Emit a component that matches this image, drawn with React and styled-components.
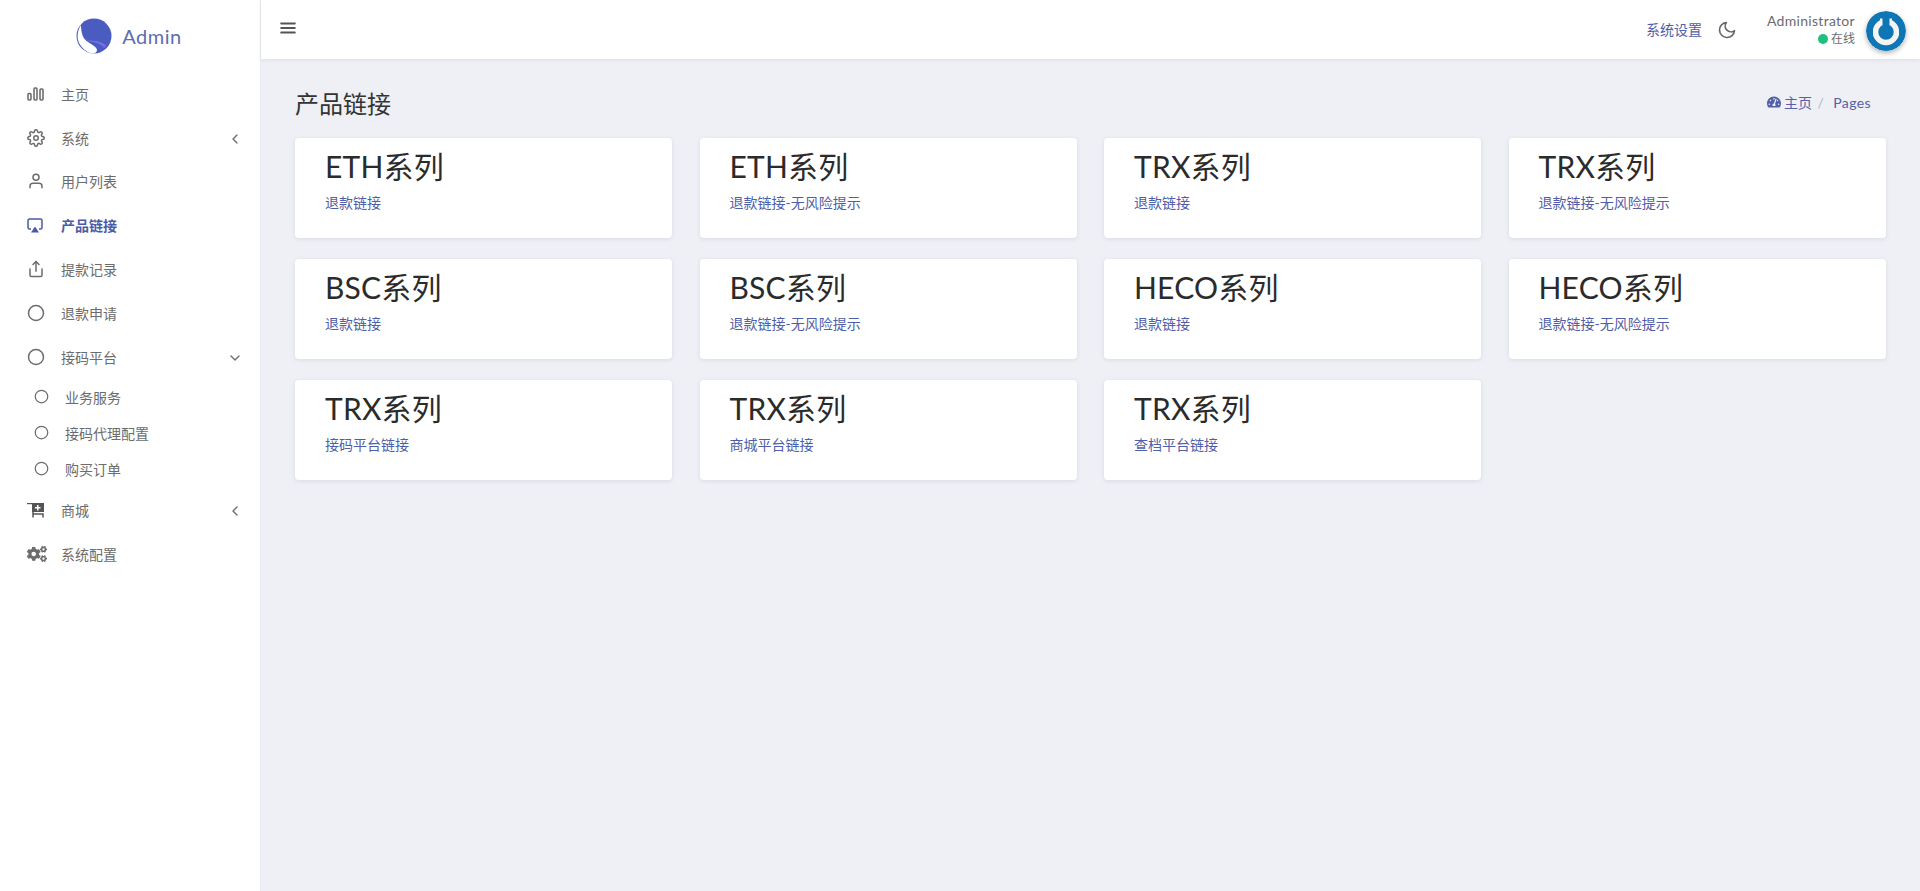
import React from "react";
import styled, { createGlobalStyle } from "styled-components";
import { FiSettings, FiUser, FiShare, FiCircle, FiChevronLeft, FiChevronDown, FiMoon, FiMenu } from "react-icons/fi";
import { FaCogs, FaTachometerAlt } from "react-icons/fa";

const FONT = `Lato, "Noto Sans CJK SC", sans-serif`;

const Global = createGlobalStyle`
  html, body { margin: 0; padding: 0; height: 100%; }
  body { font-family: ${FONT}; font-size: 14px; color: #6c757d; background: #eef0f5; }
  * { box-sizing: border-box; }
`;

const Page = styled.div`
  display: flex;
  height: 891px;
  overflow: hidden;
`;

const Sidebar = styled.aside`
  width: 261px;
  flex: none;
  background: #fff;
  border-right: 1px solid #e8eaf0;
`;

const Brand = styled.div`
  height: 72px;
  display: flex;
  align-items: center;
  justify-content: center;
  gap: 10px;
  font-size: 20px;
  letter-spacing: 0.5px;
  color: #5f6cb0;
  padding-right: 2px;
`;

const Nav = styled.nav`
  display: flex;
  flex-direction: column;
`;

const NavItem = styled.div`
  height: 43.8px;
  display: flex;
  align-items: center;
  padding: 0 17px 0 27px;
  font-size: 14px;
  font-weight: ${p => (p.$active ? 700 : 400)};
  color: ${p => (p.$active ? "#4a5aa8" : "#6c6c6c")};
`;

const NavIcon = styled.span`
  width: 34px;
  flex: none;
  display: flex;
  align-items: center;
  font-size: 18px;
`;

const Arrow = styled.span`
  margin: 2px 0 0 auto;
  display: flex;
  font-size: 16px;
`;

const SubGroup = styled.div`
  padding-bottom: 2px;
`;

const SubItem = styled.div`
  height: 36px;
  display: flex;
  align-items: center;
  padding-left: 34px;
  font-size: 14px;
  color: #6c6c6c;
`;

const SubIcon = styled.span`
  width: 31px;
  flex: none;
  display: flex;
  font-size: 15px;
`;

const Main = styled.div`
  flex: 1;
  min-width: 0;
`;

const Topbar = styled.header`
  height: 59px;
  background: #fff;
  display: flex;
  align-items: center;
  padding: 0 14px 0 18px;
  box-shadow: 0 1px 4px rgba(80, 90, 120, 0.12);
`;

const MenuBtn = styled.span`
  display: flex;
  font-size: 18px;
  color: #555;
  margin-top: -4px;
`;

const TopRight = styled.div`
  margin-left: auto;
  display: flex;
  align-items: center;
`;

const TopLink = styled.span`
  font-size: 14px;
  color: #4f5ea8;
  margin-top: -2px;
`;

const Moon = styled.span`
  display: flex;
  font-size: 20px;
  color: #666;
  margin: 0 30px 0 15px;
`;

const UserBox = styled.div`
  display: flex;
  flex-direction: column;
  align-items: flex-end;
  margin-right: 11px;
  line-height: 18px;
  color: #6c6c6c;
  font-size: 14px;
  letter-spacing: 0.3px;
`;

const Status = styled.span`
  display: flex;
  align-items: center;
  gap: 3px;
  font-size: 12px;
  letter-spacing: 0;
`;

const Dot = styled.i`
  width: 10px;
  height: 10px;
  border-radius: 50%;
  background: #1fbf7f;
`;

const Avatar = styled.svg`
  width: 40px;
  height: 40px;
  flex: none;
  margin-top: 3px;
  border-radius: 50%;
  box-shadow: 0 2px 5px rgba(0, 0, 0, 0.3);
`;

const Content = styled.main`
  padding: 15px 34px 0 34px;
`;

const TitleRow = styled.div`
  display: flex;
  align-items: center;
  justify-content: space-between;
  height: 64px;
  padding: 0 15px 8px 0;
`;

const Title = styled.h1`
  margin: 0;
  font-size: 24px;
  font-weight: 400;
  color: #333;
`;

const Crumbs = styled.div`
  display: flex;
  align-items: center;
  font-size: 14px;
  color: #5361a8;
`;

const CrumbIcon = styled.span`
  display: flex;
  font-size: 14px;
  margin-right: 3px;
`;

const Sep = styled.span`
  color: #b3b8c4;
  margin: 0 9.500px 0 5.500px;
`;

const CrumbLast = styled.span`
  letter-spacing: 0.4px;
`;

const Grid = styled.div`
  display: grid;
  grid-template-columns: repeat(4, 377px);
  column-gap: 27.5px;
  row-gap: 21px;
`;

const Card = styled.div`
  height: 100px;
  background: #fff;
  border-radius: 4px;
  box-shadow: 0 1px 4px rgba(80, 90, 120, 0.14);
  padding: 7px 30px 0;
`;

const CardTitle = styled.h3`
  margin: 0;
  font-size: 30px;
  line-height: 42px;
  font-weight: 400;
  letter-spacing: 0.2px;
  color: #2b2b2b;
`;

const CardLink = styled.div`
  margin-top: 6px;
  font-size: 14px;
  line-height: 20px;
  color: #4f5ea8;
`;

const CARDS = [
  ["ETH系列", "退款链接"],
  ["ETH系列", "退款链接-无风险提示"],
  ["TRX系列", "退款链接"],
  ["TRX系列", "退款链接-无风险提示"],
  ["BSC系列", "退款链接"],
  ["BSC系列", "退款链接-无风险提示"],
  ["HECO系列", "退款链接"],
  ["HECO系列", "退款链接-无风险提示"],
  ["TRX系列", "接码平台链接"],
  ["TRX系列", "商城平台链接"],
  ["TRX系列", "查档平台链接"],
];

function Logo() {
  return (
    <svg width="36" height="36" viewBox="0 0 36 36">
      <circle cx="18" cy="18" r="17.5" fill="#4a5cc0" />
      <path d="M5 7 C1 13 0 22 5 28 C8 32 12 35 17 35.500 C19 35.500 21 34 21 32 C21 29 16 27 12 24 C7 21 5 15 5 7Z" fill="#fff" />
      <path d="M6 19 C11 23 17 24 21 25 C24 26 27 28 28 30 L30 28 C28 25 24 24 20 23 C15 23 10 22 6 19Z" fill="#7a6cf0" />
    </svg>
  );
}

function BarsIcon() {
  return (
    <svg width="17" height="14" viewBox="0 0 17 14" fill="none" stroke="#666" strokeWidth="1.500">
      <rect x="1" y="6.500" width="3" height="6.500" rx="1" />
      <rect x="7" y="1" width="3" height="12" rx="1" />
      <rect x="13" y="2" width="3" height="11" rx="1" />
    </svg>
  );
}

function AirplayIcon() {
  return (
    <svg width="16" height="15" viewBox="0 0 16 15">
      <path d="M4 11H2.500A1.500 1.500 0 0 1 1 9.500v-7A1.500 1.500 0 0 1 2.500 1h11A1.500 1.500 0 0 1 15 2.500v7a1.500 1.500 0 0 1-1.500 1.500H12" fill="none" stroke="#4a5aa8" strokeWidth="1.500" />
      <path d="M8 8.500L12 14.500H4z" fill="#4a5aa8" />
    </svg>
  );
}

function CartIcon() {
  return (
    <svg width="17" height="15" viewBox="0 0 17 15">
      <path d="M0 .6h5" stroke="#555" strokeWidth="1.200" />
      <path d="M5 0h12v9H5z" fill="#555" />
      <path d="M10 2h1.500v2H13.500v1.500H11.500v2H10v-2H8V4h2z" fill="#fff" />
      <path d="M6 9v5.500M6 11h10v3.500" fill="none" stroke="#555" strokeWidth="1.500" />
    </svg>
  );
}

export default function App() {
  return (
    <Page>
      <Global />
      <Sidebar>
        <Brand><Logo />Admin</Brand>
        <Nav>
          <NavItem><NavIcon><BarsIcon /></NavIcon>主页</NavItem>
          <NavItem><NavIcon><FiSettings /></NavIcon>系统<Arrow><FiChevronLeft /></Arrow></NavItem>
          <NavItem><NavIcon><FiUser /></NavIcon>用户列表</NavItem>
          <NavItem $active><NavIcon><AirplayIcon /></NavIcon>产品链接</NavItem>
          <NavItem><NavIcon><FiShare /></NavIcon>提款记录</NavItem>
          <NavItem><NavIcon><FiCircle /></NavIcon>退款申请</NavItem>
          <NavItem><NavIcon><FiCircle /></NavIcon>接码平台<Arrow><FiChevronDown /></Arrow></NavItem>
          <SubGroup>
            <SubItem><SubIcon><FiCircle /></SubIcon>业务服务</SubItem>
            <SubItem><SubIcon><FiCircle /></SubIcon>接码代理配置</SubItem>
            <SubItem><SubIcon><FiCircle /></SubIcon>购买订单</SubItem>
          </SubGroup>
          <NavItem><NavIcon><CartIcon /></NavIcon>商城<Arrow><FiChevronLeft /></Arrow></NavItem>
          <NavItem><NavIcon><FaCogs size={20} /></NavIcon>系统配置</NavItem>
        </Nav>
      </Sidebar>
      <Main>
        <Topbar>
          <MenuBtn><FiMenu strokeWidth={2.8} /></MenuBtn>
          <TopRight>
            <TopLink>系统设置</TopLink>
            <Moon><FiMoon /></Moon>
            <UserBox>
              <span>Administrator</span>
              <Status><Dot />在线</Status>
            </UserBox>
            <Avatar viewBox="0 0 40 40">
              <defs>
                <filter id="soft"><feGaussianBlur stdDeviation="0.7" /></filter>
              </defs>
              <circle cx="20" cy="20" r="20" fill="#0f76b5" />
              <g filter="url(#soft)">
                <circle cx="20" cy="21" r="10.500" fill="none" stroke="#f4f4f4" strokeWidth="5.500" />
                <rect x="15.500" y="4" width="9" height="14" fill="#0f76b5" />
                <rect x="14" y="7.500" width="2.500" height="7" fill="#f4f4f4" />
                <rect x="23.500" y="7.500" width="2.500" height="7" fill="#f4f4f4" />
              </g>
              <rect x="18" y="9" width="4" height="13" rx="2" fill="#0f76b5" />
            </Avatar>
          </TopRight>
        </Topbar>
        <Content>
          <TitleRow>
            <Title>产品链接</Title>
            <Crumbs>
              <CrumbIcon><FaTachometerAlt /></CrumbIcon>主页<Sep>/</Sep><CrumbLast>Pages</CrumbLast>
            </Crumbs>
          </TitleRow>
          <Grid>
            {CARDS.map(([title, link], i) => (
              <Card key={i}>
                <CardTitle>{title}</CardTitle>
                <CardLink>{link}</CardLink>
              </Card>
            ))}
          </Grid>
        </Content>
      </Main>
    </Page>
  );
}
